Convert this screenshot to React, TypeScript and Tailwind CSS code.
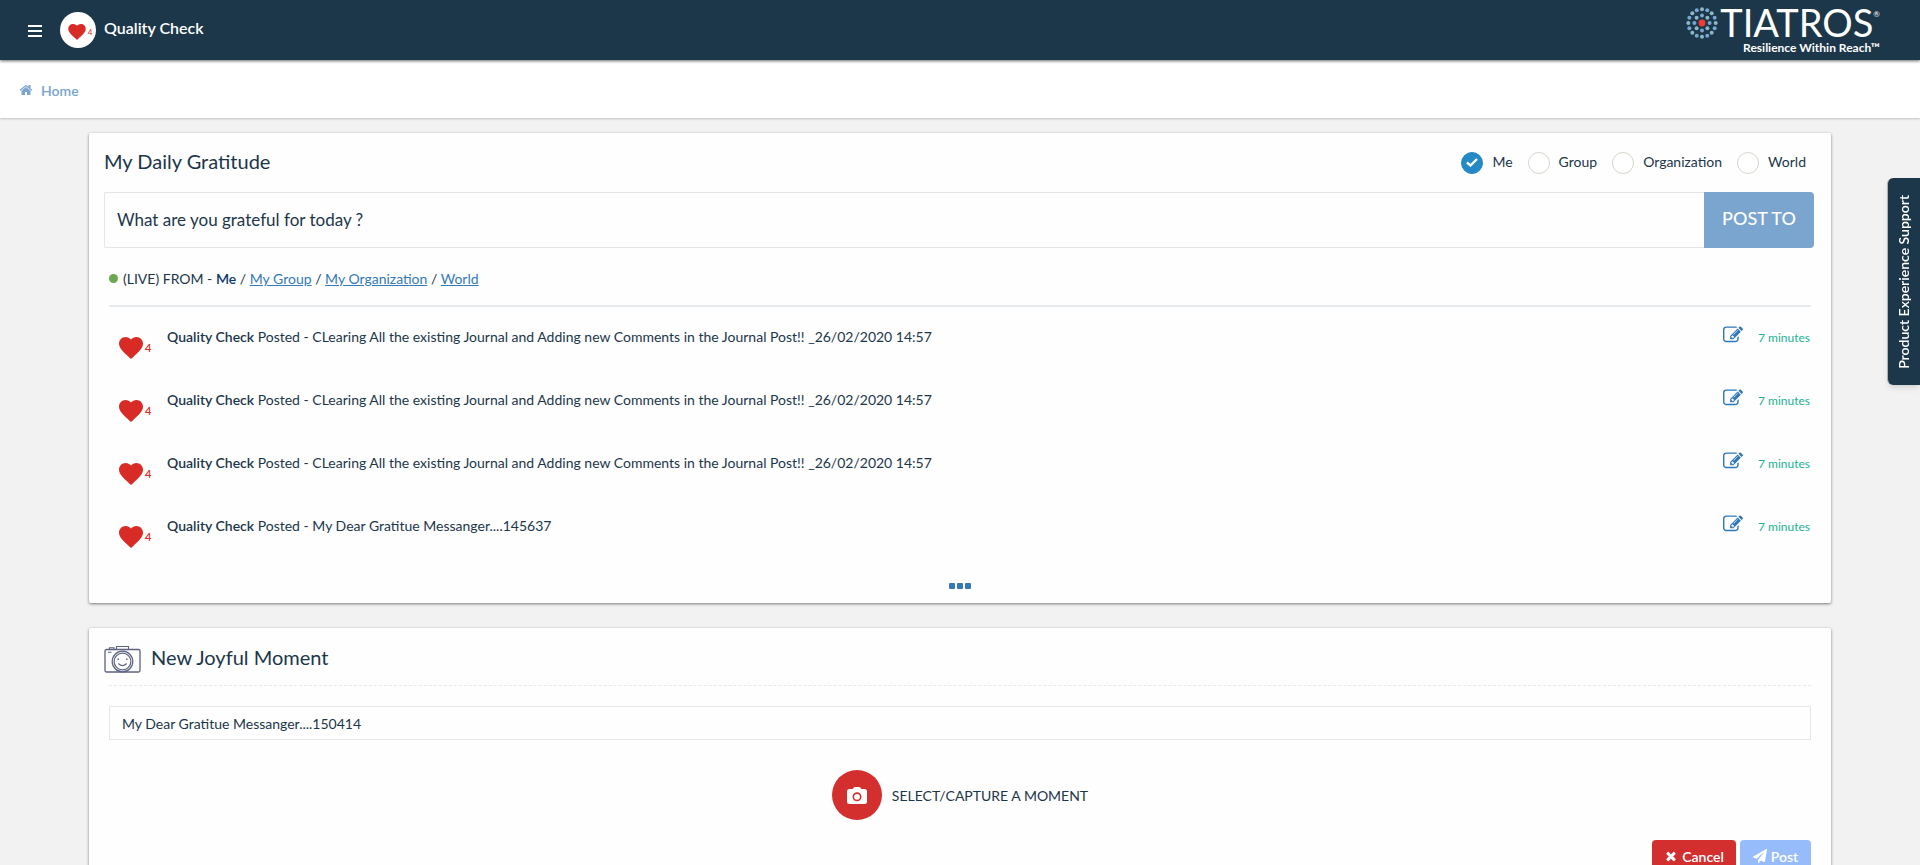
import React, { useState } from "react";

const SANS = "font-[Lato,'Liberation_Sans',sans-serif]";

type IconProps = { className?: string; d: string };

function Glyph({ className, d }: IconProps) {
  return (
    <svg viewBox="0 0 1792 1792" fill="currentColor" aria-hidden="true" className={className}>
      <path d={d} />
    </svg>
  );
}

const HOME =
  "M1472 992v480q0 26-19 45t-45 19h-384v-384h-256v384h-384q-26 0-45-19t-19-45v-480q0-1 .5-3t.5-3l575-474 575 474q1 2 1 6zm223-69l-62 74q-8 9-21 11h-3q-13 0-21-7l-692-577-692 577q-12 8-24 7-13-2-21-11l-62-74q-8-10-7-23.5t11-21.5l719-599q32-26 76-26t76 26l244 204v-195q0-14 9-23t23-9h192q14 0 23 9t9 23v408l219 182q10 8 11 21.5t-7 23.5z";
const EDIT =
  "M888 1184l116-116-152-152-116 116v56h96v96h56zm440-720q-16-16-33 1l-350 350q-17 17-1 33t33-1l350-350q17-17 1-33zm80 594v190q0 119-84.5 203.5t-203.5 84.5h-832q-119 0-203.5-84.5t-84.5-203.5v-832q0-119 84.5-203.5t203.5-84.5h832q63 0 117 25 15 7 18 23 3 17-9 29l-49 49q-14 14-32 8-23-6-45-6h-832q-66 0-113 47t-47 113v832q0 66 47 113t113 47h832q66 0 113-47t47-113v-126q0-13 9-22l64-64q15-15 35-7t20 29zm-96-738l288 288-672 672h-288v-288zm444 132l-92 92-288-288 92-92q28-28 68-28t68 28l152 152q28 28 28 68t-28 68z";
const TIMES =
  "M1490 1322q0 40-28 68l-136 136q-28 28-68 28t-68-28l-294-294-294 294q-28 28-68 28t-68-28l-136-136q-28-28-28-68t28-68l294-294-294-294q-28-28-28-68t28-68l136-136q28-28 68-28t68 28l294 294 294-294q28-28 68-28t68 28l136 136q28 28 28 68t-28 68l-294 294 294 294q28 28 28 68z";
const PLANE =
  "M1764 11q33 24 27 64l-256 1536q-5 29-32 45-14 8-31 8-11 0-24-5l-453-185-242 295q-18 23-49 23-13 0-22-4-19-7-30.5-23.5t-11.5-36.5v-349l864-1059-1069 925-395-162q-37-14-40-55-2-40 32-59l1664-960q15-9 32-9 20 0 36 11z";

function Heart({ className }: { className?: string }) {
  return (
    <svg viewBox="2 3 20 18.35" fill="#d92b26" aria-hidden="true" className={className}>
      <path d="M12 21.35l-1.45-1.32C5.4 15.36 2 12.28 2 8.5 2 5.42 4.42 3 7.5 3c1.74 0 3.41.81 4.5 2.09C13.09 3.81 14.76 3 16.5 3 19.58 3 22 5.42 22 8.5c0 3.78-3.4 6.86-8.55 11.54L12 21.35z" />
    </svg>
  );
}

function LogoMark() {
  const rings = [
    { r: 7.6, n: 8 },
    { r: 13.7, n: 16 },
  ];
  return (
    <svg viewBox="0 0 32 32" aria-hidden="true" className="size-8">
      {rings.map((ring, k) =>
        Array.from({ length: ring.n }, (_, i) => {
          const a = ((i * 360) / ring.n) * (Math.PI / 180);
          return (
            <circle
              key={`${k}-${i}`}
              cx={16 + ring.r * Math.cos(a)}
              cy={16 + ring.r * Math.sin(a)}
              r={2}
              fill={(i + k) % 2 ? "#8cb8c4" : "#78a6d0"}
            />
          );
        })
      )}
      <circle cx="16" cy="16" r="3.4" fill="#f23c2e" />
    </svg>
  );
}

function SmileCamera() {
  return (
    <svg viewBox="0 0 37 27" fill="none" stroke="#5d6280" aria-hidden="true" className="mt-1.5 -ml-[5px] h-[27px] w-[37px]">
      <rect x="1" y="3.5" width="35" height="22.5" rx="1.5" strokeWidth="1.3" />
      <path d="M12.5 3.5v-3h12v3M5.5 3.5v-1.8h4.5v1.8M4 6.3h3.5" strokeWidth="1.1" />
      <circle cx="18.5" cy="15.5" r="10.3" strokeWidth="1.2" fill="#fff" />
      <circle cx="18.5" cy="15.5" r="8.4" strokeWidth="1.2" />
      <path d="M14.6 17.8q3.9 3.6 7.8 0" strokeWidth="1.2" strokeLinecap="round" />
      <path d="M13.5 13.3h1.4M22.1 13.3h1.4" strokeWidth="1.4" />
    </svg>
  );
}

const audiences = ["Me", "Group", "Organization", "World"];

const posts = [
  "CLearing All the existing Journal and Adding new Comments in the Journal Post!! _26/02/2020 14:57",
  "CLearing All the existing Journal and Adding new Comments in the Journal Post!! _26/02/2020 14:57",
  "CLearing All the existing Journal and Adding new Comments in the Journal Post!! _26/02/2020 14:57",
  "My Dear Gratitue Messanger....145637",
];

function Header() {
  return (
    <header className="relative z-10 flex h-15 items-center justify-between bg-[#1c364a] pr-10 pl-7 shadow-[0_1px_3px_rgba(0,0,0,0.6)]">
      <div className="flex items-center">
        <button type="button" aria-label="Menu" className="flex h-8 w-8 items-center pt-0.5 text-white">
          <svg viewBox="0 0 14 12" fill="currentColor" aria-hidden="true" className="h-3 w-3.5">
            <path d="M0 0h14v2H0zM0 5h14v2H0zM0 10h14v2H0z" />
          </svg>
        </button>
        <span className="flex size-9 items-center justify-center gap-0.5 rounded-full bg-white pt-1 pl-1">
          <Heart className="h-4 w-[18px]" />
          <span className="text-[8px] text-[#d92b26]">4</span>
        </span>
        <span className="pb-1 pl-2 text-[16px] font-semibold text-white">Quality Check</span>
      </div>
      <a href="#" className="flex h-full items-start text-white">
        <span className="pt-[7px] pr-0.5">
          <LogoMark />
        </span>
        <span className="flex flex-col items-end pt-1">
          <span className="flex items-start">
            <span className="text-[38px] leading-9">TIATROS</span>
            <span className="pt-1 text-[8px] leading-3">®</span>
          </span>
          <span className="pt-0.5 text-[12px] leading-3 font-bold">Resilience Within Reach™</span>
        </span>
      </a>
    </header>
  );
}

function AudiencePicker() {
  const [audience, setAudience] = useState("Me");
  return (
    <fieldset className="flex items-center gap-[15px] pr-2">
      {audiences.map((name) => (
        <label key={name} className="flex items-center gap-[9px] text-[14px] leading-6">
          <span className="grid size-[22px] place-items-center">
            <input
              type="radio"
              name="audience"
              checked={audience === name}
              onChange={() => setAudience(name)}
              className="peer col-start-1 row-start-1 size-[22px] appearance-none rounded-full border border-[#d7d5cd] bg-white checked:border-[#2489c5] checked:bg-[#2489c5]"
            />
            <svg
              viewBox="0 0 12 9"
              fill="none"
              stroke="#fff"
              strokeWidth="2.4"
              aria-hidden="true"
              className="pointer-events-none col-start-1 row-start-1 h-[9px] w-3 opacity-0 peer-checked:opacity-100"
            >
              <path d="M1 4.5l3.5 3L11 1" />
            </svg>
          </span>
          <span className="pb-0.5">{name}</span>
        </label>
      ))}
    </fieldset>
  );
}

function PostRow({ text }: { text: string }) {
  return (
    <li className="flex h-[63px] items-start pt-5">
      <span className="flex w-[58px] items-center gap-0.5 pt-2.5 pl-2.5">
        <Heart className="h-[22px] w-6" />
        <span className="text-[11px] leading-4 font-semibold text-[#d92b26]">4</span>
      </span>
      <p className="grow text-[14px] leading-5">
        <span className="font-semibold">Quality Check</span> Posted - {text}
      </p>
      <button type="button" aria-label="Edit post" className="-mt-0.5 text-[#2f78b9]">
        <Glyph d={EDIT} className="size-5" />
      </button>
      <span className="pt-px pr-px pl-[15px] text-[12px] leading-5 text-[#1bb394]">7 minutes</span>
    </li>
  );
}

function GratitudeCard() {
  return (
    <section className="rounded-xs bg-[#fefefe] pr-[17px] pl-[15px] shadow-[0_1px_3px_rgba(0,0,0,0.5)]">
      <div className="flex h-[59px] items-center justify-between">
        <h2 className="pb-1 text-[20px]">My Daily Gratitude</h2>
        <AudiencePicker />
      </div>
      <div className="flex h-14">
        <input
          type="text"
          aria-label="What are you grateful for today ?"
          placeholder="What are you grateful for today ?"
          className="min-w-0 grow rounded-l-xs border border-r-0 border-[#e5e6e7] px-3 text-[17px] placeholder:text-[#1c364a] placeholder:opacity-100"
        />
        <button type="button" className="w-[110px] rounded-r-sm bg-[#79a5cf] pb-1 text-[18px] font-medium text-white">
          POST TO
        </button>
      </div>
      <div className="pr-[3px] pl-[5px]">
        <div className="flex h-[59px] items-center gap-[5px] border-b-2 border-[#e7eaec] pt-1 text-[14px]">
          <span className="size-[9px] rounded-full bg-[#6aa84f]" />
          <p>
            (LIVE) FROM - <span className="font-semibold text-[#0b3a6a]">Me</span> /{" "}
            <a href="#" className="text-[#337ab7] underline">My Group</a> /{" "}
            <a href="#" className="text-[#337ab7] underline">My Organization</a> /{" "}
            <a href="#" className="text-[#337ab7] underline">World</a>
          </p>
        </div>
        <ul>
          {posts.map((text, i) => (
            <PostRow key={i} text={text} />
          ))}
        </ul>
        <div className="flex h-11 items-center justify-center pt-2.5">
          <button type="button" aria-label="Load more" className="flex gap-0.5">
            <span className="size-1.5 rounded-[1px] bg-[#337ab7]" />
            <span className="size-1.5 rounded-[1px] bg-[#337ab7]" />
            <span className="size-1.5 rounded-[1px] bg-[#337ab7]" />
          </button>
        </div>
      </div>
    </section>
  );
}

function MomentCard() {
  return (
    <section className="rounded-xs bg-[#fefefe] px-5 pb-6 shadow-[0_1px_3px_rgba(0,0,0,0.5)]">
      <div className="flex h-[58px] items-center border-b border-dashed border-[#e7eaec]">
        <SmileCamera />
        <h2 className="pl-2.5 text-[20px]">New Joyful Moment</h2>
      </div>
      <input
        type="text"
        aria-label="Moment title"
        defaultValue="My Dear Gratitue Messanger....150414"
        className="mt-5 block h-[34px] w-full border border-[#e5e6e7] px-3 text-[14px]"
      />
      <div className="flex justify-center pt-[30px]">
        <button type="button" className="flex items-center gap-2.5 text-[14px]">
          <span className="flex size-[50px] items-center justify-center rounded-full bg-[#d32f2f]">
            <svg viewBox="0 0 20 17" aria-hidden="true" className="h-[17px] w-5">
              <path
                fill="#fff"
                d="M6.5 0.8Q7 0 8 0h4q1 0 1.5 0.8L14.3 2H17.5Q20 2 20 4.5v10Q20 17 17.5 17h-15Q0 17 0 14.5v-10Q0 2 2.5 2H5.7z"
              />
              <circle cx="10" cy="9.8" r="3.7" fill="none" stroke="#d32f2f" strokeWidth="1.6" />
            </svg>
          </span>
          SELECT/CAPTURE A MOMENT
        </button>
      </div>
      <div className="flex justify-end gap-1 pt-5">
        <button
          type="button"
          className="flex h-[34px] w-[84px] items-center justify-center gap-1 rounded-sm bg-[#d32f2f] pb-0.5 text-[14px] font-semibold text-white"
        >
          <Glyph d={TIMES} className="size-3.5" />
          Cancel
        </button>
        <button
          type="button"
          className="flex h-[34px] w-[71px] items-center justify-center gap-1 rounded-sm bg-[#97bcfc] pb-0.5 text-[14px] font-semibold text-white"
        >
          <Glyph d={PLANE} className="size-3.5" />
          Post
        </button>
      </div>
    </section>
  );
}

export default function App() {
  return (
    <div className={`h-screen overflow-hidden bg-[#f2f2f2] text-[#1c364a] ${SANS}`}>
      <Header />
      <nav
        aria-label="Breadcrumb"
        className="flex h-[58px] items-center bg-white px-[19px] pt-0.5 shadow-[0_1px_2px_rgba(0,0,0,0.2)]"
      >
        <a href="#" className="flex items-center gap-2 text-[14px] font-semibold text-[#79a5cf]">
          <Glyph d={HOME} className="size-3.5" />
          Home
        </a>
      </nav>
      <main className="flex flex-col gap-[25px] px-[89px] pt-[15px]">
        <GratitudeCard />
        <MomentCard />
      </main>
      <button
        type="button"
        className="fixed top-[178px] right-0 flex h-[207px] w-[33px] items-center justify-center rounded-l-md border-l border-[#a8b2ba] bg-[#1c364a] pr-0.5 shadow-md"
      >
        <span className="rotate-180 text-[14px] font-semibold text-white [writing-mode:vertical-rl]">
          Product Experience Support
        </span>
      </button>
    </div>
  );
}
